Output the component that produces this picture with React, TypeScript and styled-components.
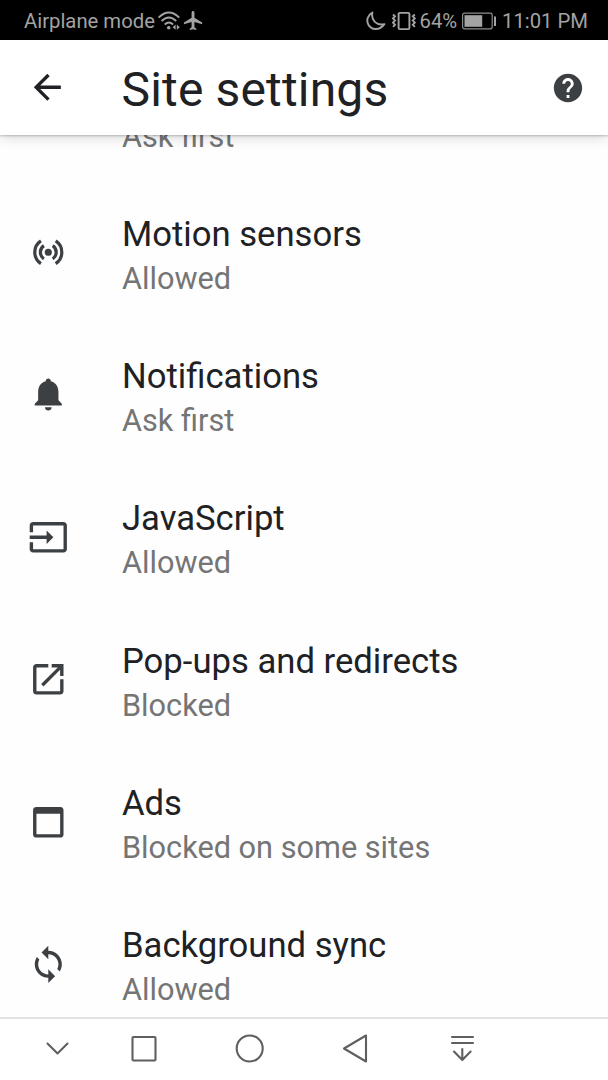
import React from "react";
import styled, { createGlobalStyle } from "styled-components";

const GlobalStyle = createGlobalStyle`
  * { box-sizing: border-box; }
  body { margin: 0; background: #fff; font-family: Roboto, "Liberation Sans", sans-serif; }
  svg { display: block; flex: none; }
`;

const Screen = styled.div`
  display: flex;
  flex-direction: column;
  width: 608px;
  height: 1080px;
  overflow: hidden;
  background: #fefefe;
`;

const StatusBar = styled.div`
  display: flex;
  align-items: center;
  flex: none;
  height: 40px;
  padding: 0 20px 0 24px;
  background: #000;
  color: #a3a3a3;
  font-size: 20.3px;
  line-height: 42px;
  white-space: nowrap;
`;

const StatusText = styled.div<{ $width: number }>`
  width: ${(p) => p.$width}px;
  margin-top: 2px;
`;

const Spacer = styled.div`
  flex: 1;
`;

const Header = styled.header`
  position: relative;
  z-index: 1;
  display: flex;
  align-items: center;
  flex: none;
  height: 95px;
  padding: 0 23.5px 0 27px;
  background: #fff;
  box-shadow: 0 1px 2px rgba(0, 0, 0, 0.22), 0 3px 12px rgba(0, 0, 0, 0.14);
`;

const Title = styled.h1`
  flex: 1;
  margin: 4px 0 0 54px;
  color: #202124;
  font-size: 48px;
  font-weight: 400;
  line-height: 56px;
  letter-spacing: 0.15px;
`;

const List = styled.main`
  display: flex;
  flex-direction: column;
  flex: 1;
  min-height: 0;
  overflow: hidden;
`;

const Row = styled.section`
  display: flex;
  align-items: center;
  flex: none;
  height: 142.35px;
  padding-left: 28px;
`;

const ScrolledRow = styled(Row)`
  height: 46.5px;
  align-items: flex-start;
  padding-left: 122px;
`;

const RowText = styled.div`
  display: flex;
  flex-direction: column;
  margin: 8px 0 0 53.4px;
`;

const Name = styled.div`
  color: #202124;
  font-size: 34.65px;
  line-height: 43px;
`;

const Detail = styled.div`
  color: #757575;
  font-size: 30.7px;
  line-height: 45px;
`;

const ScrolledDetail = styled(Detail)`
  margin-top: -21px;
`;

const NavBar = styled.nav`
  display: flex;
  align-items: center;
  flex: none;
  height: 63px;
  padding: 0 0 2px 37px;
  gap: 65px;
  border-top: 2px solid #e2e2e2;
  background: #fff;

  & > :first-child {
    margin-right: -17px;
  }
`;

const Icon = ({ d, size = 40.6, fill = "#3c4043" }: { d: string; size?: number; fill?: string }) => (
  <svg width={size} height={size} viewBox="0 0 24 24" fill={fill}>
    <path d={d} fillRule="evenodd" />
  </svg>
);

const MotionIcon = () => (
  <svg width="40.6" height="40.6" viewBox="0 0 24 24" fill="none" stroke="#3c4043" strokeWidth="1.9">
    <circle cx="12" cy="12" r="2.1" fill="#3c4043" stroke="none" />
    <path d="M7.64 5.3a8 8 0 0 0 0 13.4M16.36 5.3a8 8 0 0 1 0 13.4M9.4 8.1a4.7 4.7 0 0 0 0 7.8M14.6 8.1a4.7 4.7 0 0 1 0 7.8" />
  </svg>
);

const NavIcon = ({ children }: { children: React.ReactNode }) => (
  <svg width="40" height="40" viewBox="0 0 40 40" fill="none" stroke="#5f5f5f" strokeWidth="2.1" strokeLinejoin="round" strokeLinecap="round">
    {children}
  </svg>
);

const WifiIcon = () => (
  <svg width="24" height="22" viewBox="0 0 24 22" fill="none" stroke="#a3a3a3" strokeWidth="2">
    <path d="M1.6 7.600Q11.900-2.600 22.200 7.600M4.600 11Q11.900 4 19.200 11M7.700 14.400Q11.900 10.600 16.100 14.400" />
    <circle cx="11.700" cy="17.800" r="1.800" fill="#a3a3a3" stroke="none" />
    <path d="M18.600 14.600v5.200l-3-2.600zM19.800 14.600v5.200l3-2.600z" fill="#a3a3a3" stroke="none" />
  </svg>
);

const MoonIcon = () => (
  <svg width="20" height="20" viewBox="0 0 20 20" fill="none" stroke="#a3a3a3" strokeWidth="1.9" strokeLinejoin="round">
    <path d="M6.400 1.500C1.500 4 .1 9.600 2.400 13.700C5.200 19 13.500 20 18.400 13.100C10.500 15 4.700 9.200 6.400 1.500z" />
  </svg>
);

const VibrateIcon = () => (
  <svg width="24" height="20" viewBox="0 0 24 20" fill="none" stroke="#a3a3a3" strokeWidth="1.9">
    <rect x="6.600" y="1.900" width="10.800" height="16.200" rx="1.200" />
    <path d="M1 3.500l2 1.800-2 2.100 2 2.100-2 2.100 2 2.100-2 2.100M22.800 3.500l-2 1.800 2 2.100-2 2.100 2 2.100-2 2.100 2 2.100" />
  </svg>
);

const BatteryIcon = () => (
  <svg width="35" height="18" viewBox="0 0 35 18" fill="none" stroke="#8d8d8d">
    <rect x=".6" y="1.200" width="29.600" height="15.600" rx="2" strokeWidth="1.200" />
    <rect x="2.500" y="3.200" width="17.700" height="11.600" fill="#a3a3a3" stroke="none" />
    <rect x="32" y="4.500" width="2" height="9.500" fill="#a3a3a3" stroke="none" />
  </svg>
);

const Status = styled.div<{ $left?: number; $top?: number }>`
  margin: ${(p) => p.$top ?? 0}px 0 0 ${(p) => p.$left ?? 0}px;
`;

const paths = {
  back: "M20 11H7.83l5.59-5.59L12 4l-8 8 8 8 1.410-1.410L7.830 13H20v-2z",
  help: "M12 2C6.480 2 2 6.480 2 12s4.480 10 10 10 10-4.480 10-10S17.520 2 12 2zm1 17h-2v-2h2v2zm2.070-7.750l-.9.920C13.450 12.900 13 13.500 13 15h-2v-.5c0-1.100.450-2.100 1.170-2.830l1.240-1.260c.370-.360.590-.860.590-1.410 0-1.100-.9-2-2-2s-2 .9-2 2H8c0-2.210 1.790-4 4-4s4 1.790 4 4c0 .880-.360 1.680-.930 2.250z",
  plane: "M21 16v-2l-8-5V3.500c0-.830-.670-1.500-1.500-1.500S10 2.670 10 3.500V9l-8 5v2l8-2.500V19l-2 1.500V22l3.500-1 3.500 1v-1.500L13 19v-5.500l8 2.500z",
  bell: "M12 21c1.100 0 2-.9 2-2h-4c0 1.100.890 2 2 2zm6-6v-5c0-3.070-1.640-5.640-4.500-6.320V3.500c0-.830-.670-1.500-1.500-1.500s-1.500.670-1.500 1.500v.180C7.630 4.360 6 6.920 6 10v5l-2 2v1h16v-1l-2-2z",
  input: "M21 3.010H3c-1.100 0-2 .9-2 2V9h2V4.990h18v14.030H3V15H1v4.010c0 1.100.9 1.980 2 1.980h18c1.100 0 2-.880 2-1.980v-14c0-1.110-.9-2-2-2zM11 16l4-4-4-4v3H1v2h10v3z",
  open: "M19 19H5V5h7V3H5c-1.110 0-2 .9-2 2v14c0 1.100.890 2 2 2h14c1.100 0 2-.9 2-2v-7h-2v7zM14 3v2h3.590l-9.830 9.830 1.410 1.410L19 6.410V10h2V3h-7z",
  window: "M5 3h14a2 2 0 0 1 2 2v14a2 2 0 0 1-2 2H5a2 2 0 0 1-2-2V5a2 2 0 0 1 2-2zM5 7v12h14V7z",
  sync: "M12 4V1L8 5l4 4V6c3.310 0 6 2.690 6 6 0 1.010-.250 1.970-.7 2.800l1.460 1.460C19.540 15.030 20 13.570 20 12c0-4.420-3.580-8-8-8zm0 14c-3.310 0-6-2.690-6-6 0-1.010.250-1.970.7-2.800L5.240 7.740C4.460 8.970 4 10.430 4 12c0 4.420 3.580 8 8 8v3l4-4-4-4v3z",
};

const settings = [
  { name: "Motion sensors", detail: "Allowed", icon: <MotionIcon /> },
  { name: "Notifications", detail: "Ask first", icon: <Icon d={paths.bell} /> },
  { name: "JavaScript", detail: "Allowed", icon: <Icon d={paths.input} /> },
  { name: "Pop-ups and redirects", detail: "Blocked", icon: <Icon d={paths.open} /> },
  { name: "Ads", detail: "Blocked on some sites", icon: <Icon d={paths.window} /> },
  { name: "Background sync", detail: "Allowed", icon: <Icon d={paths.sync} /> },
];

export default function App() {
  return (
    <Screen>
      <GlobalStyle />
      <StatusBar>
        <StatusText $width={132.5}>Airplane mode</StatusText>
        <Status $top={2}><WifiIcon /></Status>
        <Status $left={1.5}><Icon d={paths.plane} size={23} fill="#a3a3a3" /></Status>
        <Spacer />
        <Status $top={1}><MoonIcon /></Status>
        <Status $left={5.5} $top={1}><VibrateIcon /></Status>
        <Status $left={4}><StatusText $width={37}>64%</StatusText></Status>
        <Status $left={5} $top={1}><BatteryIcon /></Status>
        <Status $left={5.5}><StatusText $width={86}>11:01 PM</StatusText></Status>
      </StatusBar>
      <Header>
        <Icon d={paths.back} size={40.6} fill="#202124" />
        <Title>Site settings</Title>
        <Icon d={paths.help} size={34} />
      </Header>
      <List>
        <ScrolledRow>
          <ScrolledDetail>Ask first</ScrolledDetail>
        </ScrolledRow>
        {settings.map((s) => (
          <Row key={s.name}>
            {s.icon}
            <RowText>
              <Name>{s.name}</Name>
              <Detail>{s.detail}</Detail>
            </RowText>
          </Row>
        ))}
      </List>
      <NavBar>
        <NavIcon><path d="M10.500 14.500l10 10 10-10" /></NavIcon>
        <NavIcon><rect x="7.500" y="8" width="23" height="23.500" rx="1" /></NavIcon>
        <NavIcon><circle cx="19.700" cy="19.500" r="13" /></NavIcon>
        <NavIcon><path d="M31 6.500v26L9 19.500z" /></NavIcon>
        <NavIcon><path d="M12 8h21M12 14h21M22.300 20v11M14 22.500l8.300 8.500 8.300-8.500" /></NavIcon>
      </NavBar>
    </Screen>
  );
}
